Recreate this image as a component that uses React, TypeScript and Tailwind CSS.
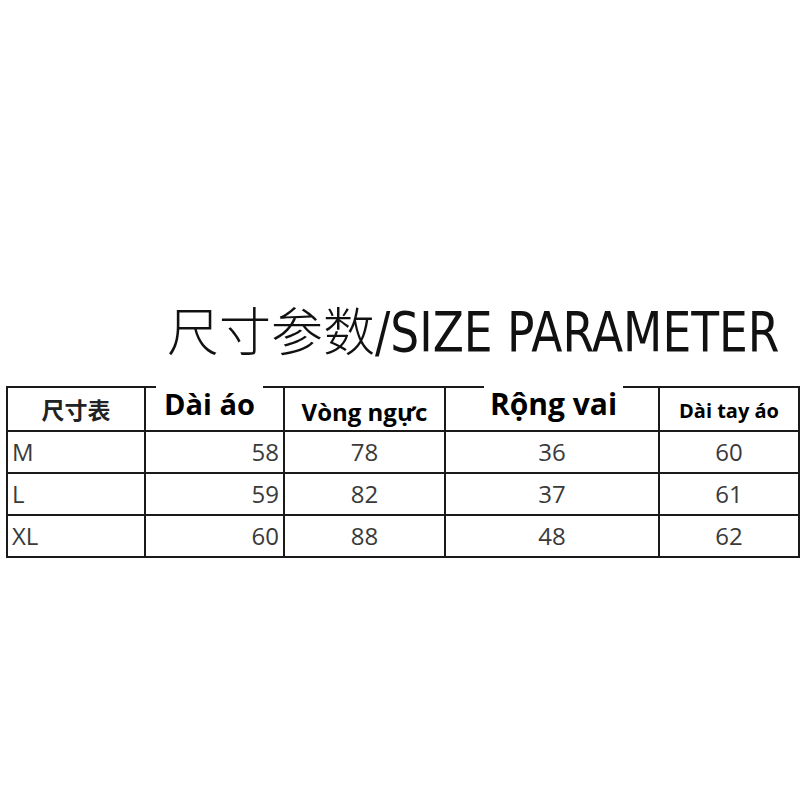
import React from "react";

const rows = [
  { size: "M", len: 58, chest: 78, shoulder: 36, sleeve: 60 },
  { size: "L", len: 59, chest: 82, shoulder: 37, sleeve: 61 },
  { size: "XL", len: 60, chest: 88, shoulder: 48, sleeve: 62 },
];

const cell = "border-2 border-[#1a1a1a] h-[42px] p-0 text-[24px] text-[#3a3a3a] font-normal";

export default function App() {
  return (
    <div className="w-[800px] h-[800px] bg-white pt-[298px] font-['Open_Sans','Noto_Sans_CJK_SC',sans-serif]">
      <h1 className="ml-[167px] flex items-baseline whitespace-nowrap text-[#111] leading-[62px] font-normal">
        <span className="text-[52px] font-['Noto_Sans_CJK_SC',sans-serif] font-light">尺寸参数</span>
        <span className="inline-block origin-left scale-x-[0.92] text-[55px] font-['DejaVu_Sans','Noto_Sans',sans-serif] font-stretch-condensed">
          /SIZE PARAMETER
        </span>
      </h1>
      <table className="mt-[23px] ml-[6px] w-[792px] table-fixed border-collapse">
        <colgroup>
          <col className="w-[138px]" />
          <col className="w-[139px]" />
          <col className="w-[161px]" />
          <col className="w-[214px]" />
          <col className="w-[140px]" />
        </colgroup>
        <thead>
          <tr className="h-[43px]">
            <th className="border-2 border-[#1a1a1a] p-0 text-[23px] font-bold text-[#222] font-['Noto_Sans_CJK_SC',sans-serif]">
              尺寸表
            </th>
            <th className="border-2 border-[#1a1a1a] p-0 align-top">
              <span className="relative -top-[4px] block ml-[10px] mr-[20px] bg-white text-[29px] leading-[36px] font-bold text-black pt-[2px]">
                Dài áo
              </span>
            </th>
            <th className="border-2 border-[#1a1a1a] p-0 text-[24px] font-bold text-black pt-[6px] whitespace-nowrap">
              Vòng ngực
            </th>
            <th className="border-2 border-[#1a1a1a] p-0 align-top">
              <span className="relative -top-[4px] block ml-[38px] mr-[35px] bg-white text-[30px] leading-[36px] font-bold text-black pt-[2px] whitespace-nowrap">
                Rộng vai
              </span>
            </th>
            <th className="border-2 border-[#1a1a1a] p-0 text-[20px] font-bold text-black pt-[4px] whitespace-nowrap">
              Dài tay áo
            </th>
          </tr>
        </thead>
        <tbody>
          {rows.map((r) => (
            <tr key={r.size}>
              <td className={`${cell} text-left pl-[4px]`}>{r.size}</td>
              <td className={`${cell} text-right pr-[4px]`}>{r.len}</td>
              <td className={`${cell} text-center`}>{r.chest}</td>
              <td className={`${cell} text-center`}>{r.shoulder}</td>
              <td className={`${cell} text-center`}>{r.sleeve}</td>
            </tr>
          ))}
        </tbody>
      </table>
    </div>
  );
}
